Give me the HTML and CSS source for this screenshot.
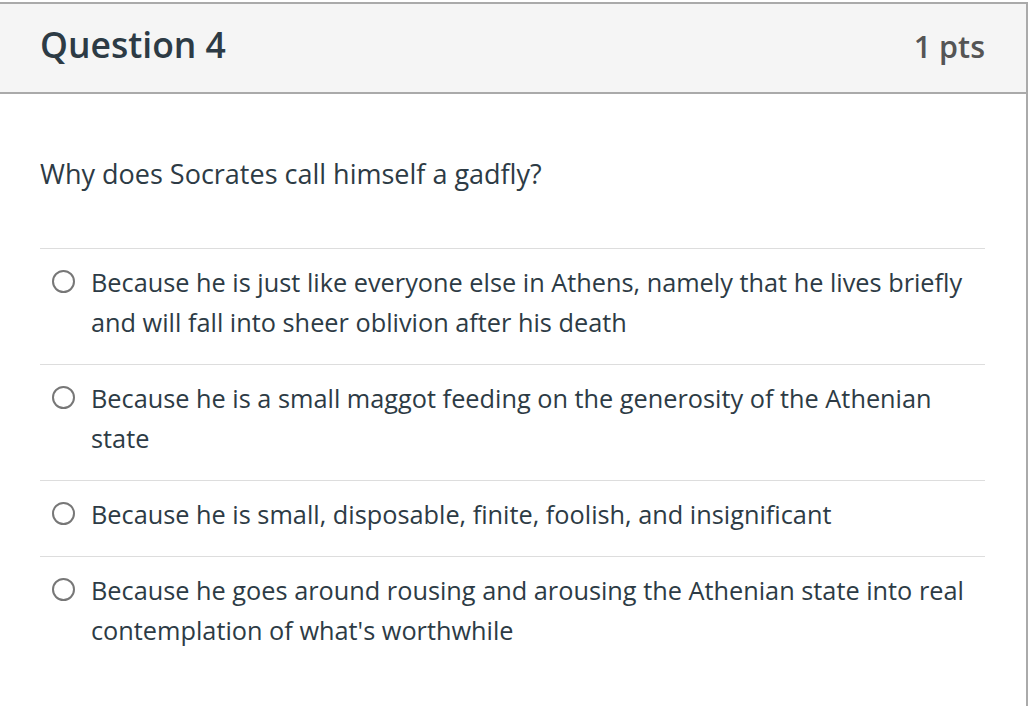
FILE: index.html
```html
<!DOCTYPE html>
<html>
<head>
<meta charset="utf-8">
<link rel="stylesheet" href="styles.css">
</head>
<body>
<div class="question">
  <div class="header">
    <h2 class="title">Question 4</h2>
    <span class="pts">1 pts</span>
  </div>
  <div class="content">
    <p class="prompt">Why does Socrates call himself a gadfly?</p>
    <div class="answers">
      <label class="answer"><span class="radio"></span><span class="text">Because he is just like everyone else in Athens, namely that he lives briefly and will fall into sheer oblivion after his death</span></label>
      <label class="answer"><span class="radio"></span><span class="text">Because he is a small maggot feeding on the generosity of the Athenian state</span></label>
      <label class="answer"><span class="radio"></span><span class="text">Because he is small, disposable, finite, foolish, and insignificant</span></label>
      <label class="answer"><span class="radio"></span><span class="text">Because he goes around rousing and arousing the Athenian state into real contemplation of what's worthwhile</span></label>
    </div>
  </div>
</div>
</body>
</html>
```
FILE: styles.css
```css
html, body {
  margin: 0;
  background: #ffffff;
}
body {
  padding-top: 2px;
  font-family: "Open Sans", "Noto Sans CJK KR", sans-serif;
  color: #2d3b45;
}
.question {
  width: 1028px;
  height: 704px;
  box-sizing: border-box;
  border-top: 2px solid #aaaaaa;
  border-right: 2px solid #aaaaaa;
}
.header {
  height: 90px;
  box-sizing: border-box;
  background: #f5f5f5;
  border-bottom: 2px solid #aaaaaa;
  display: flex;
  justify-content: space-between;
  align-items: baseline;
  padding: 18px 41px 0 40px;
}
.title {
  margin: 0;
  font-size: 35.5px;
  font-weight: 600;
  line-height: 44px;
  color: #2d3b45;
}
.pts {
  font-size: 30.5px;
  font-weight: 600;
  color: #555555;
  line-height: 44px;
}
.content {
  padding: 0 41px 0 40px;
}
.prompt {
  margin: 0;
  padding-top: 60px;
  height: 154px;
  box-sizing: border-box;
  font-size: 27px;
  line-height: 40px;
}
.answers {
  display: flex;
  flex-direction: column;
}
.answer {
  display: flex;
  align-items: flex-start;
  gap: 16px;
  border-top: 1px solid #dddddd;
  padding: 13px 0 22px 12px;
  font-size: 25.3px;
  line-height: 40px;
}
.radio {
  flex: none;
  width: 23px;
  height: 23px;
  box-sizing: border-box;
  border: 2px solid #777777;
  border-radius: 50%;
  margin-top: 8px;
}
.text {
  flex: 1;
}
```
